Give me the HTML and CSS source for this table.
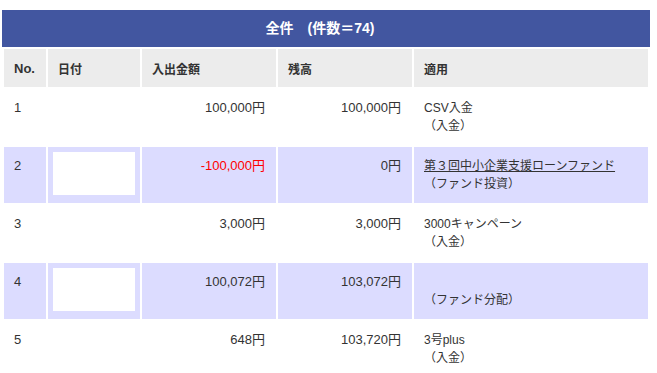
FILE: index.html
```html
<!DOCTYPE html>
<html lang="ja">
<head>
<meta charset="utf-8">
<title>全件</title>
<link rel="stylesheet" href="styles.css">
</head>
<body>
<div class="wrap">
  <div class="title">全件　(件数＝74)</div>
  <table class="list">
    <colgroup>
      <col class="c-no"><col class="c-date"><col class="c-amt"><col class="c-bal"><col class="c-memo">
    </colgroup>
    <thead>
      <tr class="head">
        <th class="th-no">No.</th><th>日付</th><th>入出金額</th><th>残高</th><th>適用</th>
      </tr>
    </thead>
    <tbody>
      <tr class="row">
        <td class="no">1</td><td class="date"><span class="datebox"></span></td>
        <td class="num">100,000円</td><td class="num">100,000円</td>
        <td class="memo">CSV入金<br>（入金）</td>
      </tr>
      <tr class="row alt">
        <td class="no">2</td><td class="date"><span class="datebox"></span></td>
        <td class="num neg">-100,000円</td><td class="num">0円</td>
        <td class="memo"><a class="link" href="#">第３回中小企業支援ローンファンド</a><br>（ファンド投資）</td>
      </tr>
      <tr class="row">
        <td class="no">3</td><td class="date"><span class="datebox"></span></td>
        <td class="num">3,000円</td><td class="num">3,000円</td>
        <td class="memo">3000キャンペーン<br>（入金）</td>
      </tr>
      <tr class="row alt">
        <td class="no">4</td><td class="date"><span class="datebox"></span></td>
        <td class="num">100,072円</td><td class="num">103,072円</td>
        <td class="memo"><br>（ファンド分配）</td>
      </tr>
      <tr class="row">
        <td class="no">5</td><td class="date"><span class="datebox"></span></td>
        <td class="num">648円</td><td class="num">103,720円</td>
        <td class="memo">3号plus<br>（入金）</td>
      </tr>
    </tbody>
  </table>
</div>
</body>
</html>
```

FILE: styles.css
```css
html, body {
  margin: 0;
  padding: 0;
  background: #ffffff;
}
body {
  font-family: "Liberation Sans", "Noto Sans CJK JP", sans-serif;
  font-size: 12px;
  color: #333333;
}
.wrap {
  width: 648px;
  padding: 10px 0 0 2px;
}
.title {
  height: 37px;
  line-height: 37px;
  background: #4256a0;
  color: #ffffff;
  font-weight: bold;
  font-size: 14px;
  text-align: center;
  padding-right: 12px;
}
.list {
  width: 648px;
  table-layout: fixed;
  border-collapse: separate;
  border-spacing: 2px;
}
.c-no { width: 42px; }
.c-date { width: 92px; }
.c-amt { width: 134px; }
.c-bal { width: 134px; }
.c-memo { width: 234px; }
.head { height: 38px; }
.head th {
  background: #ececec;
  text-align: left;
  vertical-align: middle;
  font-weight: bold;
  font-size: 12px;
  padding: 0 0 0 10px;
  color: #333333;
}
.head th.th-no { font-size: 13px; }
.row { height: 56px; }
.row td {
  vertical-align: top;
  padding: 10px 11px 0 10px;
  line-height: 18px;
  background: #ffffff;
}
.row.alt td { background: #dcdcff; }
.row td.no { font-size: 13px; }
.row td.date { padding: 5px; }
.datebox {
  display: block;
  width: 82px;
  height: 43px;
  background: #ffffff;
}
.row td.num {
  text-align: right;
  font-size: 13px;
}
.row td.neg { color: #ff0000; }
.row td.memo { font-size: 12px; }
.link {
  color: #333333;
  text-decoration: underline;
}
```
